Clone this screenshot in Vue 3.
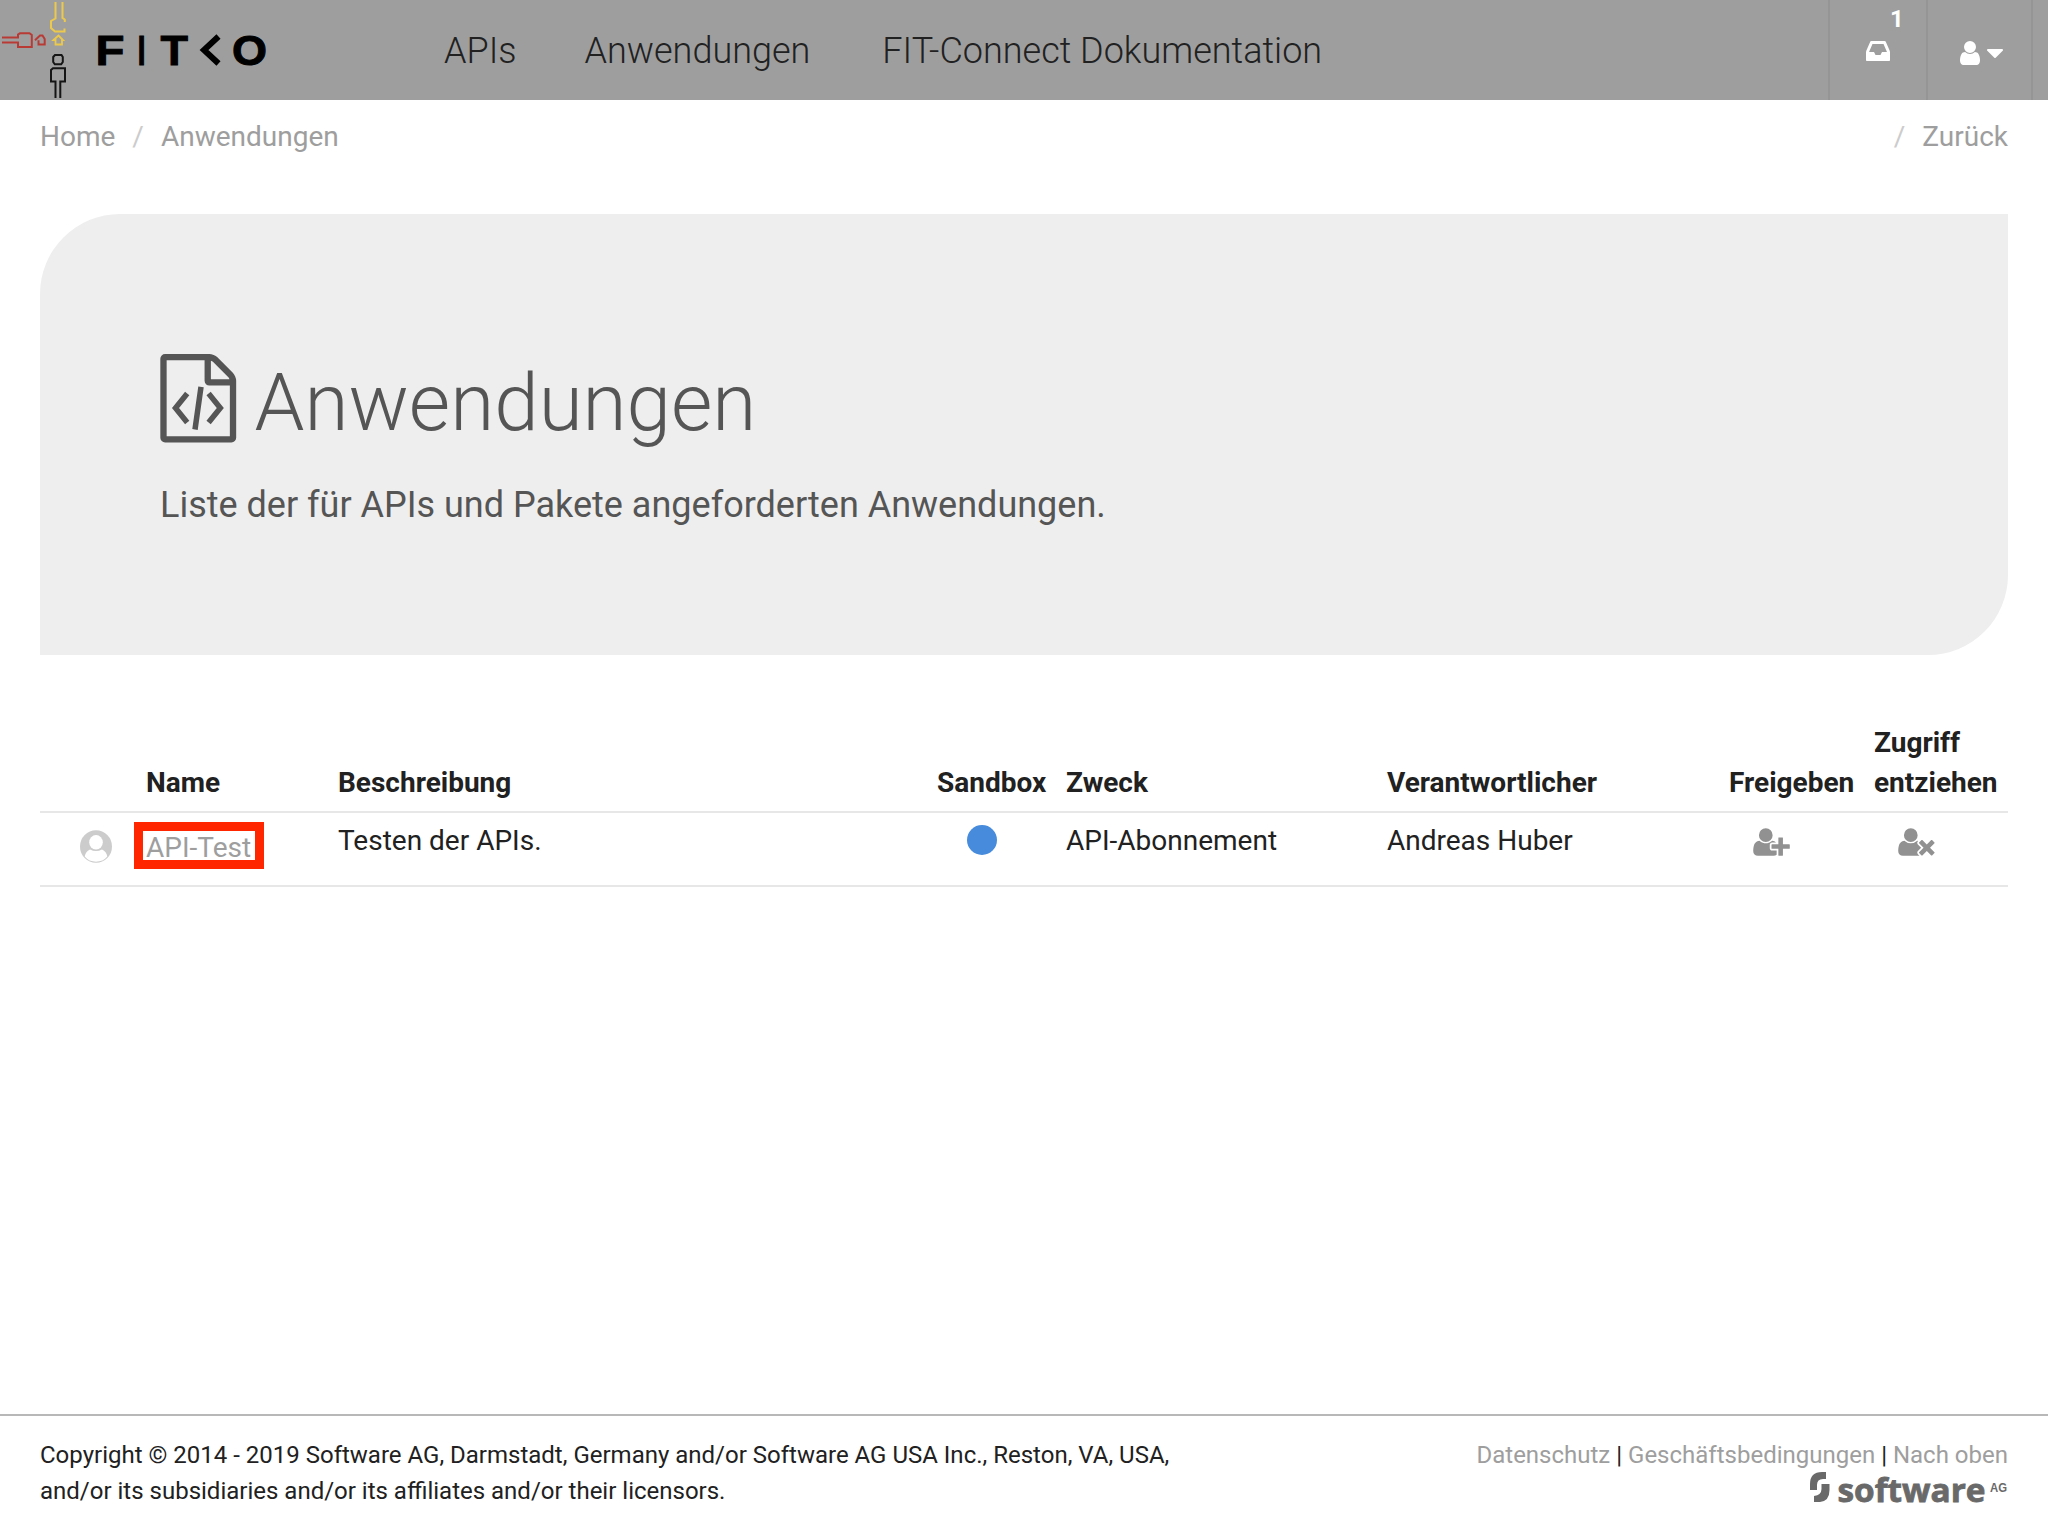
<script setup>
const navItems = ['APIs', 'Anwendungen', 'FIT-Connect Dokumentation']
const columns = ['', 'Name', 'Beschreibung', 'Sandbox', 'Zweck', 'Verantwortlicher', 'Freigeben', 'Zugriff entziehen']
const rows = [
  { name: 'API-Test', description: 'Testen der APIs.', purpose: 'API-Abonnement', owner: 'Andreas Huber' },
]
</script>

<template>
  <div class="page">
    <header class="topbar">
      <svg class="brand" viewBox="0 0 300 100" width="300" height="100">
        <g fill="none" stroke-width="2">
          <path stroke="#b93a35" d="M2 37.500H18V34.500L20 33.300H29.500L31.800 35V47H18V42.500H2" />
          <path stroke="#b93a35" d="M35 40.300L40 35.500H42.500L44.700 39V44.500H38.500V40.300" />
          <path stroke="#ecc94b" d="M55.500 2V18.500L51 21V28L55 31.500H64.500V28.500M62.500 2V18L64.800 19.500V22" />
          <path stroke="#ecc94b" stroke-width="1.800" d="M53.500 40L58.500 35.500L63 40H62V44.500H55.500V40Z" />
          <path stroke="#151515" d="M55 55H61.500L62.800 57V62L61.200 64.300H54.800L53.200 62V57Z" />
          <path stroke="#151515" d="M55.500 98V81.500H51V70L53 68.300H65V81.500H60.300V98" />
        </g>
        <g fill="#000" stroke="#000" stroke-width="0.900" font-family="Liberation Sans, sans-serif" font-size="42">
          <text x="95.500" y="64.700" font-weight="700" textLength="29" lengthAdjust="spacingAndGlyphs">F</text>
          <text x="135.700" y="64.700">I</text>
          <text x="160.500" y="64.700" font-weight="700" textLength="27.500" lengthAdjust="spacingAndGlyphs">T</text>
          <text x="232" y="64.500" font-weight="700" textLength="35" lengthAdjust="spacingAndGlyphs">O</text>
        </g>
        <path d="M218.500 36.500L204 50L218.500 63.500" fill="none" stroke="#000" stroke-width="6" />
      </svg>
      <nav class="nav">
        <a v-for="item in navItems" :key="item">{{ item }}</a>
      </nav>
      <div class="tools">
        <div class="tool inbox">
          <svg width="28" height="28" viewBox="0 0 1792 1792" fill="#fff"><path d="M1151 960h316q-1-3-2.500-8.500t-2.500-7.500l-212-496h-708l-212 496q-1 3-2.500 8.500t-2.500 7.500h316l95 192h320zm513 30v482q0 26-19 45t-45 19h-1408q-26 0-45-19t-19-45v-482q0-62 25-123l238-552q10-25 36.500-42t52.500-17h832q26 0 52.500 17t36.500 42l238 552q25 61 25 123z" /></svg>
          <span class="badge">1</span>
        </div>
        <div class="tool account">
          <svg width="28" height="28" viewBox="0 0 1792 1792" fill="#fff"><path d="M1536 1399q0 109-62.500 187t-150.500 78h-854q-88 0-150.500-78t-62.500-187q0-85 8.500-160.500t31.500-152 58.500-131 94-89 134.500-34.500q131 128 313 128t313-128q76 0 134.500 34.500t94 89 58.500 131 31.500 152 8.500 160.500zm-256-887q0 159-112.500 271.500t-271.500 112.500-271.500-112.500-112.500-271.500 112.500-271.500 271.500-112.500 271.500 112.500 112.500 271.500z" /></svg>
          <svg class="caret" width="28" height="28" viewBox="0 0 1792 1792" fill="#fff"><path d="M1408 704q0 26-19 45l-448 448q-19 19-45 19t-45-19l-448-448q-19-19-19-45t19-45 45-19h896q26 0 45 19t19 45z" /></svg>
        </div>
      </div>
    </header>

    <div class="crumbs">
      <div><a>Home</a><i>/</i><a>Anwendungen</a></div>
      <div><i>/</i><a>Zurück</a></div>
    </div>

    <section class="hero">
      <h1>
        <svg width="88.500" height="88.500" viewBox="0 0 1792 1792">
          <path fill="#555" d="M1596 380q28 28 48 76t20 88v1152q0 40-28 68t-68 28h-1344q-40 0-68-28t-28-68v-1600q0-40 28-68t68-28h896q40 0 88 20t76 48zm-444-244v376h376q-10-29-22-41l-313-313q-12-12-41-22zm384 1528v-1024h-416q-40 0-68-28t-28-68v-416h-768v1536h1280z" />
          <path transform="scale(20.250)" fill="none" stroke="#555" stroke-width="5.500" d="M33.200 39.500L21.500 54L33.200 68.500M47 32.800L41 75.500M54.600 39.500L66.300 54L54.600 68.500" />
        </svg>
        <span>Anwendungen</span>
      </h1>
      <p>Liste der für APIs und Pakete angeforderten Anwendungen.</p>
    </section>

    <main class="table">
      <div class="row head">
        <div v-for="(column, i) in columns" :key="i">{{ column }}</div>
      </div>
      <div v-for="row in rows" :key="row.name" class="row body">
        <div class="avatar">
          <svg width="32" height="33" viewBox="0 0 32 33">
            <ellipse cx="16" cy="16.500" rx="16" ry="16.300" fill="#ccc" />
            <path fill="#fff" d="M10 19.500Q13 21 16 21T22 19.500Q26.500 21.500 27.300 26.500Q23 31.700 16 31.700T4.700 26.500Q5.500 21.500 10 19.500Z" />
            <circle cx="16" cy="12.500" r="8" fill="#ccc" />
            <ellipse cx="16" cy="12.300" rx="6.800" ry="7.300" fill="#fff" />
          </svg>
        </div>
        <div class="name"><a>{{ row.name }}</a></div>
        <div>{{ row.description }}</div>
        <div class="dot-cell"><span class="dot"></span></div>
        <div>{{ row.purpose }}</div>
        <div>{{ row.owner }}</div>
        <div class="action">
          <svg width="37" height="32" viewBox="0 0 2048 1792" fill="#919191"><path d="M704 896q-159 0-271.500-112.500t-112.500-271.500 112.500-271.500 271.500-112.500 271.500 112.500 112.500 271.500-112.500 271.500-271.500 112.500zm960 128h352q13 0 22.500 9.500t9.500 22.500v192q0 13-9.500 22.500t-22.500 9.500h-352v352q0 13-9.500 22.500t-22.500 9.500h-192q-13 0-22.500-9.500t-9.500-22.500v-352h-352q-13 0-22.500-9.500t-9.500-22.500v-192q0-13 9.500-22.500t22.500-9.500h352v-352q0-13 9.500-22.500t22.500-9.500h192q13 0 22.500 9.500t9.500 22.500v352zm-736 224q0 52 38 90t90 38h256v238q-68 50-171 50h-874q-121 0-194-69t-73-190q0-53 3.500-103.500t14-109 26.500-108.500 43-97.500 62-81 85.500-53.500 111.500-20q19 0 39 17 79 61 154.500 91.500t164.500 30.500 164.500-30.500 154.500-91.500q20-17 39-17 132 0 217 96h-223q-52 0-90 38t-38 90v192z" /></svg>
        </div>
        <div class="action">
          <svg width="37" height="32" viewBox="0 0 2048 1792" fill="#919191"><path d="M704 896q-159 0-271.500-112.500t-112.500-271.500 112.500-271.500 271.500-112.500 271.500 112.500 112.500 271.500-112.500 271.500-271.500 112.500zm1077 320l249 249q9 9 9 23 0 13-9 22l-136 136q-9 9-22 9-14 0-23-9l-249-249-249 249q-9 9-23 9-13 0-22-9l-136-136q-9-9-9-22 0-14 9-23l249-249-249-249q-9-9-9-23 0-13 9-22l136-136q9-9 22-9 14 0 23 9l249 249 249-249q9-9 23-9 13 0 22 9l136 136q9 9 9 22 0 14-9 23zm-498 0l-181 181q-37 37-37 91 0 53 37 90l83 83q-21 3-44 3h-874q-121 0-194-69t-73-190q0-53 3.500-103.500t14-109 26.500-108.500 43-97.500 62-81 85.500-53.500 111.500-20q19 0 39 17 154 122 319 122t319-122q20-17 39-17 28 0 57 6-28 27-41 50t-13 56q0 54 37 91z" /></svg>
        </div>
      </div>
    </main>

    <footer class="footer">
      <div class="copyright">Copyright © 2014 - 2019 Software AG, Darmstadt, Germany and/or Software AG USA Inc., Reston, VA, USA, and/or its subsidiaries and/or its affiliates and/or their licensors.</div>
      <div class="legal">
        <div><a>Datenschutz</a> | <a>Geschäftsbedingungen</a> | <a>Nach oben</a></div>
        <svg class="vendor" width="198" height="44" viewBox="0 0 198 44" fill="#696969">
          <path d="M0 18V12Q0 0 12 0H16V7H13Q7 7 7 13V18Z" />
          <path d="M11.500 12H19.500V18Q19.500 29 10 30H4V24Q11.500 23 11.500 17Z" />
          <text x="27.500" y="29.500" stroke="#696969" stroke-width="0.800" font-family="Open Sans, sans-serif" font-weight="700" font-size="32" textLength="148" lengthAdjust="spacingAndGlyphs">software</text>
          <text x="180" y="20" font-family="Liberation Sans, sans-serif" font-weight="700" font-size="12" textLength="17" lengthAdjust="spacingAndGlyphs">AG</text>
        </svg>
      </div>
    </footer>
  </div>
</template>

<style>
body {
  margin: 0;
  background: #fff;
}
</style>

<style scoped>
.page {
  box-sizing: border-box;
  width: 2048px;
  height: 1536px;
  display: flex;
  flex-direction: column;
  overflow: hidden;
  background: #fff;
  color: #212121;
  font: 400 28px/40px Roboto, sans-serif;
}
svg {
  display: block;
  flex: none;
}
.topbar {
  display: flex;
  height: 100px;
  flex: none;
  background: #9e9e9e;
}
.nav {
  display: flex;
  gap: 70px;
  margin-left: 144px;
  font-size: 36px;
  font-weight: 300;
  line-height: 103px;
}
.nav a:nth-child(2) {
  margin: 0 2px 0 -2px;
}
.tools {
  display: flex;
  margin-left: auto;
  padding-right: 15px;
}
.tool {
  position: relative;
  box-sizing: border-box;
  display: flex;
  border-left: 2px solid #959595;
}
.inbox {
  width: 98px;
  padding: 37px 0 0 34px;
}
.account {
  width: 107px;
  padding: 39px 0 0 28px;
  border-right: 2px solid #959595;
}
.caret {
  margin-left: -3px;
}
.badge {
  position: absolute;
  left: 60px;
  top: 5px;
  color: #fff;
  font-size: 24px;
  font-weight: 700;
  line-height: 28px;
}
.crumbs {
  display: flex;
  justify-content: space-between;
  padding: 17px 40px 0;
  color: #9e9e9e;
}
.crumbs i {
  margin: 0 17px;
  color: #ccc;
  font-style: normal;
}
.hero {
  box-sizing: border-box;
  height: 441px;
  flex: none;
  margin: 57px 40px 0;
  padding: 140px 120px 0;
  border-radius: 80px 0;
  background: #eee;
  color: #555;
}
h1 {
  display: flex;
  margin: 0 0 0 -6px;
  font-size: 80px;
  font-weight: 300;
  line-height: 98px;
}
h1 span {
  margin-left: 12px;
}
.hero p {
  margin: 28px 0 0;
  font-size: 36px;
  line-height: 50px;
}
.table {
  margin: 67px 40px 0;
  border-bottom: 2px solid #e7e7e7;
}
.row {
  display: grid;
  grid-template-columns: 96px 192px 599px 129px 321px 342px 145px 144px;
}
.row > div {
  padding: 0 10px;
}
.head {
  height: 89px;
  align-items: end;
  font-weight: 700;
}
.head > div {
  padding-bottom: 8px;
}
.body {
  height: 72px;
  border-top: 2px solid #e7e7e7;
}
.body > div {
  padding-top: 8px;
}
.body > .avatar {
  padding: 17px 0 0 40px;
}
.body > .name {
  position: relative;
  padding-top: 15px;
  color: #9e9e9e;
}
.name::after {
  position: absolute;
  left: -2px;
  top: 9px;
  box-sizing: border-box;
  width: 130px;
  height: 47px;
  border: 9px solid #ff2600;
  content: '';
}
.body > .dot-cell {
  padding: 12px 0 0 40px;
}
.dot {
  display: block;
  width: 30px;
  height: 30px;
  border-radius: 50%;
  background: #468bdc;
}
.body > .action {
  padding: 13px 0 0 34px;
}
.footer {
  box-sizing: border-box;
  display: flex;
  justify-content: space-between;
  height: 122px;
  margin-top: auto;
  padding: 21px 40px 0;
  border-top: 2px solid #b8b8b8;
  font-size: 24px;
  line-height: 36px;
}
.copyright {
  width: 1160px;
}
.legal {
  display: flex;
  flex-direction: column;
  align-items: flex-end;
}
.legal a {
  color: #9e9e9e;
}
.vendor {
  margin-top: -1px;
}
</style>
